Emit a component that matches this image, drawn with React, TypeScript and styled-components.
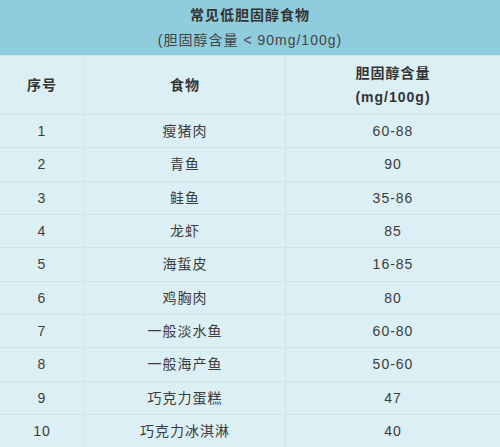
import styled, { createGlobalStyle } from "styled-components";

const GlobalStyle = createGlobalStyle`
  html, body {
    margin: 0;
    padding: 0;
    background: #dceff5;
  }
  body {
    font-family: "Liberation Sans", "Noto Sans CJK SC", sans-serif;
    color: #333;
  }
`;

const Page = styled.div`
  width: 500px;
  height: 447px;
  overflow: hidden;
  background: #dceff5;
`;

const Banner = styled.div`
  height: 56px;
  box-sizing: border-box;
  background: #8fcddc;
  border-bottom: 1px solid #d5e3e8;
  display: flex;
  flex-direction: column;
  align-items: center;
  padding-top: 5px;
`;

const Title = styled.div`
  font-size: 14px;
  font-weight: bold;
  letter-spacing: 1px;
  line-height: 20px;
  color: #333;
`;

const Subtitle = styled.div`
  font-size: 14px;
  letter-spacing: 1px;
  line-height: 24px;
  margin-top: 3px;
  color: #444;
`;

const Row = styled.div<{ $height: number }>`
  display: grid;
  grid-template-columns: 85px 201px 1fr;
  height: ${(p) => p.$height}px;
  box-sizing: border-box;
  border-bottom: 1px solid #d8e2e6;
`;

const Cell = styled.div<{ $head?: boolean }>`
  display: flex;
  flex-direction: column;
  align-items: center;
  justify-content: center;
  border-right: 1px solid #d8e2e6;
  font-size: 14px;
  letter-spacing: 1px;
  line-height: 24px;
  font-weight: ${(p) => (p.$head ? "bold" : "normal")};
  color: ${(p) => (p.$head ? "#333" : "#3c3c3c")};
  &:last-child {
    border-right: none;
  }
`;

const rows: [string, string, string][] = [
  ["1", "瘦猪肉", "60-88"],
  ["2", "青鱼", "90"],
  ["3", "鲑鱼", "35-86"],
  ["4", "龙虾", "85"],
  ["5", "海蜇皮", "16-85"],
  ["6", "鸡胸肉", "80"],
  ["7", "一般淡水鱼", "60-80"],
  ["8", "一般海产鱼", "50-60"],
  ["9", "巧克力蛋糕", "47"],
  ["10", "巧克力冰淇淋", "40"],
];

const App = () => {
  return (
    <Page>
      <GlobalStyle />
      <Banner>
        <Title>常见低胆固醇食物</Title>
        <Subtitle>(胆固醇含量 &lt; 90mg/100g)</Subtitle>
      </Banner>
      <Row $height={59}>
        <Cell $head>序号</Cell>
        <Cell $head>食物</Cell>
        <Cell $head>
          <span>胆固醇含量</span>
          <span>(mg/100g)</span>
        </Cell>
      </Row>
      {rows.map(([n, food, value]) => (
        <Row key={n} $height={33.33}>
          <Cell>{n}</Cell>
          <Cell>{food}</Cell>
          <Cell>{value}</Cell>
        </Row>
      ))}
    </Page>
  );
};

export default App;
